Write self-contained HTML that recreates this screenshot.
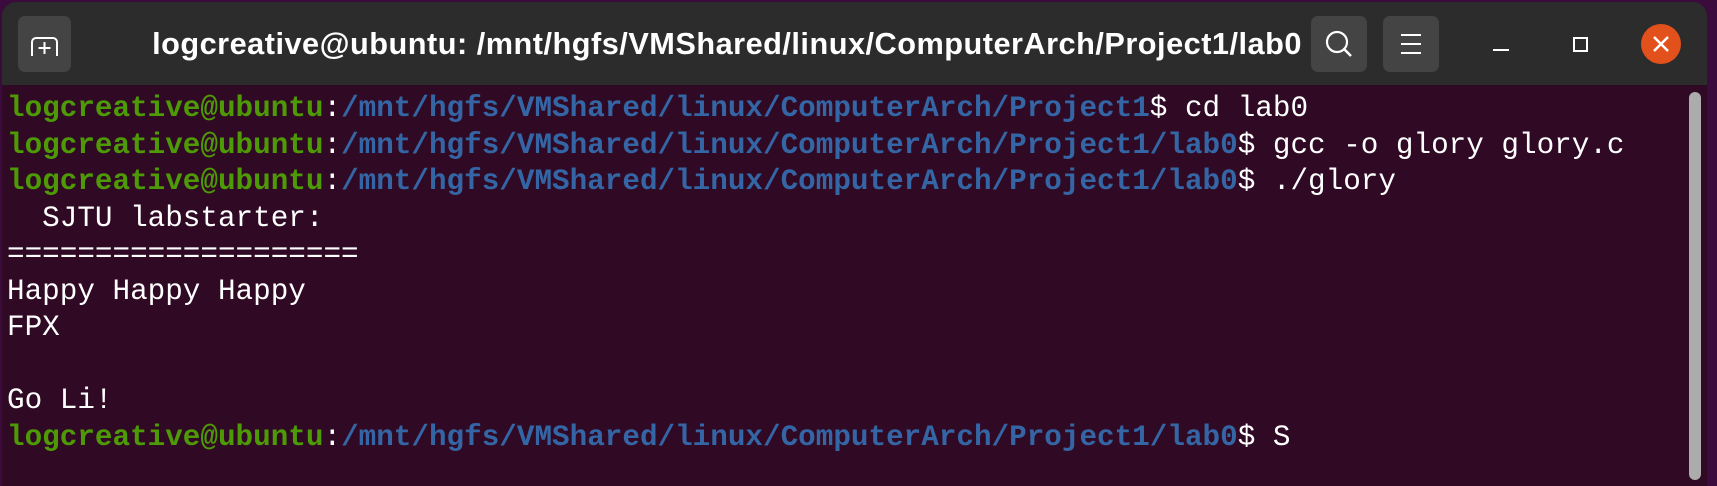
<!DOCTYPE html>
<html><head><style>
html,body{margin:0;padding:0;width:1717px;height:486px;overflow:hidden;background:#3a0b3c;}
.win{position:absolute;left:2px;top:2px;width:1705px;height:484px;background:#300a24;border-radius:14px 14px 0 0;overflow:hidden;}
.tb{position:absolute;left:0;top:0;width:100%;height:83px;background:#2c2c2c;}
.btn{position:absolute;top:14px;width:56px;height:56px;background:#444;border-radius:7px;}
.title{position:absolute;left:140px;width:1170px;top:24px;text-align:center;color:#fff;font:bold 30.7px "Liberation Sans",sans-serif;letter-spacing:0.5px;white-space:nowrap;}
.term{position:absolute;left:5px;top:89px;font:29.3px/36.5px "Liberation Mono",monospace;color:#fff;white-space:pre;}
.g{color:#4e9a06;font-weight:bold}.b{color:#3465a4;font-weight:bold}
.sb{position:absolute;left:1687px;top:90px;width:12px;height:388px;background:#acacac;border-radius:6px;}
</style></head><body>
<div class="win">
<div class="tb">
<div class="btn" style="left:16px;width:53px;"><svg width="53" height="56"><path d="M14 40 V26 a4 4 0 0 1 4-4 H35 a4 4 0 0 1 4 4 V40" fill="none" stroke="#fff" stroke-width="2"/><path d="M26.5 26 v12 M20.5 32 h12" stroke="#fff" stroke-width="2"/></svg></div>
<div class="title">logcreative@ubuntu: /mnt/hgfs/VMShared/linux/ComputerArch/Project1/lab0</div>
<div class="btn" style="left:1309px;"><svg width="56" height="56"><circle cx="26" cy="26" r="10" fill="none" stroke="#fff" stroke-width="2.2"/><path d="M33 33 L40 40" stroke="#fff" stroke-width="2.5"/></svg></div>
<div class="btn" style="left:1381px;"><svg width="56" height="56"><path d="M18 19 H38 M18 28 H38 M18 37 H38" stroke="#fff" stroke-width="2"/></svg></div>
<svg style="position:absolute;left:1480px;top:20px" width="220" height="50"><path d="M11 28 H27" stroke="#fff" stroke-width="2"/><rect x="92" y="16" width="13" height="13" fill="none" stroke="#fff" stroke-width="2"/><circle cx="179" cy="22" r="20" fill="#e2501c"/><path d="M172 15 L186 29 M186 15 L172 29" stroke="#fff" stroke-width="2.5"/></svg>
</div>
<div class="term"><span class="g">logcreative@ubuntu</span>:<span class="b">/mnt/hgfs/VMShared/linux/ComputerArch/Project1</span>$ cd lab0
<span class="g">logcreative@ubuntu</span>:<span class="b">/mnt/hgfs/VMShared/linux/ComputerArch/Project1/lab0</span>$ gcc -o glory glory.c
<span class="g">logcreative@ubuntu</span>:<span class="b">/mnt/hgfs/VMShared/linux/ComputerArch/Project1/lab0</span>$ ./glory
  SJTU labstarter:
====================
Happy Happy Happy
FPX

Go Li!
<span class="g">logcreative@ubuntu</span>:<span class="b">/mnt/hgfs/VMShared/linux/ComputerArch/Project1/lab0</span>$ S</div>
<div class="sb"></div>
</div>
</body></html>
